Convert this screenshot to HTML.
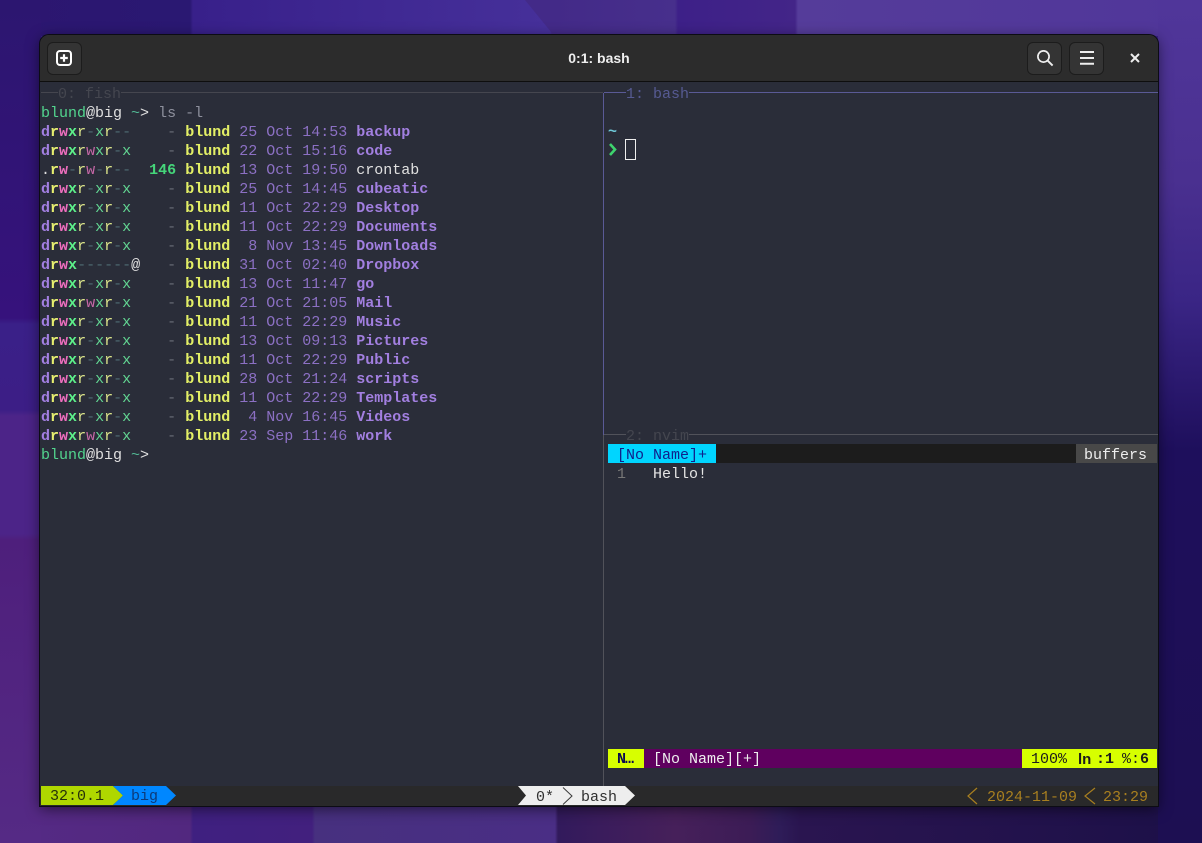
<!DOCTYPE html>
<html><head><meta charset="utf-8"><style>
html,body{margin:0;padding:0;width:1202px;height:843px;overflow:hidden;background:#3a2088}
div,pre,svg{position:absolute}
#top{left:0;top:0;width:1202px;height:36px;background:linear-gradient(90deg,#2c1670 0,#2a1872 190px,#38208a 193px,#46309a 550px,#432a88 552px,#472f8c 675px,#3d2088 678px,#432588 795px,#553c9a 798px,#50369a 1202px)}
#bot{left:0;top:806px;width:1202px;height:37px;background:linear-gradient(90deg,#552a85 0,#52287f 190px,#3f2080 193px,#42207e 312px,#47307f 315px,#4a2e85 555px,#321a5c 558px,#3a1c5c 600px,#46205a 675px,#3c1c56 750px,#2e1c58 780px,#2a1550 800px,#1c1048 1202px)}
#left{left:0;top:0;width:41px;height:843px;background:linear-gradient(180deg,#2c1670 0,#36127c 318px,#3a2088 324px,#3c1e86 410px,#4c2488 416px,#4c2488 534px,#4e1f7c 540px,#552a85 843px)}
#right{left:1158px;top:0;width:44px;height:843px;background:linear-gradient(180deg,#50369a 0,#4a3090 180px,#3a2585 300px,#1e0f5c 450px,#1d0f52 843px)}
#win{left:40px;top:35px;width:1118px;height:771px;background:#2a2d39;border-radius:9px 9px 0 0;box-shadow:0 0 0 1px #0c0c14,0 3px 14px rgba(0,0,0,.55);overflow:hidden}
#bar{left:0;top:0;width:1118px;height:46px;background:#2c2c2c;border-bottom:1px solid #0e0e0e}
.btn{width:33px;height:31px;top:7px;background:#343434;border:1px solid #1c1c1c;border-radius:6px}
#title{left:0;top:0;width:1118px;height:46px;line-height:46px;text-align:center;font:bold 14px/46px "Liberation Sans",sans-serif;color:#eee}
pre{margin:0;font:15px/19px "Liberation Mono",monospace;color:#e0e0e0;white-space:pre}
b{font-weight:bold}
.p1{color:#a27fe0;font-weight:bold}.y{color:#e6ee70;font-weight:bold}.w{color:#ee6fbe;font-weight:bold}.x{color:#5df08a;font-weight:bold}
.yn{color:#dbe48a}.wn{color:#c868a8}.xn{color:#62d592}.m{color:#4f6a72}
.u{color:#e3ef66;font-weight:bold}.dt{color:#8c70c4}.nm{color:#a27fe0;font-weight:bold}.sz{color:#45d67a;font-weight:bold}.dm{color:#6a6d78}
.gr{color:#52d58e}.c{color:#8d8f9c}
</style></head><body>
<div id="top"></div><div id="bot"></div><div id="left"></div><div id="right"></div>
<svg style="left:0;top:0" width="1202" height="36"><polygon points="525,0 556,38 556,0" fill="#432a88"/></svg>
<div id="win">
<div id="bar"></div>
<div id="title">0:1: bash</div>
<div class="btn" style="left:7px"></div>
<svg style="left:16px;top:15px" width="16" height="16" viewBox="0 0 16 16"><rect x="1" y="1" width="14" height="14" rx="3" fill="none" stroke="#fff" stroke-width="2"/><path d="M8 4.2v7.6M4.2 8h7.6" stroke="#fff" stroke-width="2.2"/></svg>
<div class="btn" style="left:987px"></div>
<svg style="left:996px;top:14px" width="18" height="18" viewBox="0 0 18 18"><circle cx="7.5" cy="7.5" r="5.6" fill="none" stroke="#eee" stroke-width="1.7"/><path d="M11.6 11.6L16.6 16.6" stroke="#eee" stroke-width="1.9"/></svg>
<div class="btn" style="left:1029px"></div>
<svg style="left:1039px;top:15px" width="16" height="16" viewBox="0 0 16 16"><path d="M1 2h14M1 8h14M1 13.7h14" stroke="#eee" stroke-width="2"/></svg>
<svg style="left:1090px;top:18px" width="10" height="10" viewBox="0 0 10 10"><path d="M1 1L9 9M9 1L1 9" stroke="#eee" stroke-width="2"/></svg>

<!-- pane lines (window offset 40,35) -->
<div style="left:1px;top:57px;width:562px;height:1px;background:#45464f"></div>
<div style="left:563px;top:58px;width:1px;height:342px;background:#5a5a96"></div>
<div style="left:563px;top:400px;width:1px;height:351px;background:#51525a"></div>
<div style="left:564px;top:57px;width:554px;height:1px;background:#5a5a96"></div>
<div style="left:564px;top:399px;width:554px;height:1px;background:#51525a"></div>
<pre style="left:18px;top:50px;background:#2a2d39;color:#44464f">0: fish</pre>
<pre style="left:586px;top:50px;background:#2a2d39;color:#565a92">1: bash</pre>
<pre style="left:586px;top:392px;background:#2a2d39;color:#44464f">2: nvim</pre>

<!-- left terminal -->
<pre style="left:1px;top:69px"><span class="gr">blund</span>@big <span style="color:#52b894">~</span>&gt; <span class="c">ls -l</span>
<span class="p1">d</span><span class="y">r</span><span class="w">w</span><span class="x">x</span><span class="yn">r</span><span class="m">-</span><span class="xn">x</span><span class="yn">r</span><span class="m">--</span>    <span class="dm">-</span> <span class="u">blund</span> <span class="dt">25 Oct 14:53</span> <span class="nm">backup</span>
<span class="p1">d</span><span class="y">r</span><span class="w">w</span><span class="x">x</span><span class="yn">r</span><span class="wn">w</span><span class="xn">x</span><span class="yn">r</span><span class="m">-</span><span class="xn">x</span>    <span class="dm">-</span> <span class="u">blund</span> <span class="dt">22 Oct 15:16</span> <span class="nm">code</span>
.<span class="y">r</span><span class="w">w</span><span class="m">-</span><span class="yn">r</span><span class="wn">w</span><span class="m">-</span><span class="yn">r</span><span class="m">--</span>  <span class="sz">146</span> <span class="u">blund</span> <span class="dt">13 Oct 19:50</span> crontab
<span class="p1">d</span><span class="y">r</span><span class="w">w</span><span class="x">x</span><span class="yn">r</span><span class="m">-</span><span class="xn">x</span><span class="yn">r</span><span class="m">-</span><span class="xn">x</span>    <span class="dm">-</span> <span class="u">blund</span> <span class="dt">25 Oct 14:45</span> <span class="nm">cubeatic</span>
<span class="p1">d</span><span class="y">r</span><span class="w">w</span><span class="x">x</span><span class="yn">r</span><span class="m">-</span><span class="xn">x</span><span class="yn">r</span><span class="m">-</span><span class="xn">x</span>    <span class="dm">-</span> <span class="u">blund</span> <span class="dt">11 Oct 22:29</span> <span class="nm">Desktop</span>
<span class="p1">d</span><span class="y">r</span><span class="w">w</span><span class="x">x</span><span class="yn">r</span><span class="m">-</span><span class="xn">x</span><span class="yn">r</span><span class="m">-</span><span class="xn">x</span>    <span class="dm">-</span> <span class="u">blund</span> <span class="dt">11 Oct 22:29</span> <span class="nm">Documents</span>
<span class="p1">d</span><span class="y">r</span><span class="w">w</span><span class="x">x</span><span class="yn">r</span><span class="m">-</span><span class="xn">x</span><span class="yn">r</span><span class="m">-</span><span class="xn">x</span>    <span class="dm">-</span> <span class="u">blund</span> <span class="dt"> 8 Nov 13:45</span> <span class="nm">Downloads</span>
<span class="p1">d</span><span class="y">r</span><span class="w">w</span><span class="x">x</span><span class="m">------</span>@   <span class="dm">-</span> <span class="u">blund</span> <span class="dt">31 Oct 02:40</span> <span class="nm">Dropbox</span>
<span class="p1">d</span><span class="y">r</span><span class="w">w</span><span class="x">x</span><span class="yn">r</span><span class="m">-</span><span class="xn">x</span><span class="yn">r</span><span class="m">-</span><span class="xn">x</span>    <span class="dm">-</span> <span class="u">blund</span> <span class="dt">13 Oct 11:47</span> <span class="nm">go</span>
<span class="p1">d</span><span class="y">r</span><span class="w">w</span><span class="x">x</span><span class="yn">r</span><span class="wn">w</span><span class="xn">x</span><span class="yn">r</span><span class="m">-</span><span class="xn">x</span>    <span class="dm">-</span> <span class="u">blund</span> <span class="dt">21 Oct 21:05</span> <span class="nm">Mail</span>
<span class="p1">d</span><span class="y">r</span><span class="w">w</span><span class="x">x</span><span class="yn">r</span><span class="m">-</span><span class="xn">x</span><span class="yn">r</span><span class="m">-</span><span class="xn">x</span>    <span class="dm">-</span> <span class="u">blund</span> <span class="dt">11 Oct 22:29</span> <span class="nm">Music</span>
<span class="p1">d</span><span class="y">r</span><span class="w">w</span><span class="x">x</span><span class="yn">r</span><span class="m">-</span><span class="xn">x</span><span class="yn">r</span><span class="m">-</span><span class="xn">x</span>    <span class="dm">-</span> <span class="u">blund</span> <span class="dt">13 Oct 09:13</span> <span class="nm">Pictures</span>
<span class="p1">d</span><span class="y">r</span><span class="w">w</span><span class="x">x</span><span class="yn">r</span><span class="m">-</span><span class="xn">x</span><span class="yn">r</span><span class="m">-</span><span class="xn">x</span>    <span class="dm">-</span> <span class="u">blund</span> <span class="dt">11 Oct 22:29</span> <span class="nm">Public</span>
<span class="p1">d</span><span class="y">r</span><span class="w">w</span><span class="x">x</span><span class="yn">r</span><span class="m">-</span><span class="xn">x</span><span class="yn">r</span><span class="m">-</span><span class="xn">x</span>    <span class="dm">-</span> <span class="u">blund</span> <span class="dt">28 Oct 21:24</span> <span class="nm">scripts</span>
<span class="p1">d</span><span class="y">r</span><span class="w">w</span><span class="x">x</span><span class="yn">r</span><span class="m">-</span><span class="xn">x</span><span class="yn">r</span><span class="m">-</span><span class="xn">x</span>    <span class="dm">-</span> <span class="u">blund</span> <span class="dt">11 Oct 22:29</span> <span class="nm">Templates</span>
<span class="p1">d</span><span class="y">r</span><span class="w">w</span><span class="x">x</span><span class="yn">r</span><span class="m">-</span><span class="xn">x</span><span class="yn">r</span><span class="m">-</span><span class="xn">x</span>    <span class="dm">-</span> <span class="u">blund</span> <span class="dt"> 4 Nov 16:45</span> <span class="nm">Videos</span>
<span class="p1">d</span><span class="y">r</span><span class="w">w</span><span class="x">x</span><span class="yn">r</span><span class="wn">w</span><span class="xn">x</span><span class="yn">r</span><span class="m">-</span><span class="xn">x</span>    <span class="dm">-</span> <span class="u">blund</span> <span class="dt">23 Sep 11:46</span> <span class="nm">work</span>
<span class="gr">blund</span>@big <span style="color:#52b894">~</span>&gt;</pre>

<!-- right top -->
<pre style="left:568px;top:88px;color:#6fc8d8;font-weight:bold">~</pre>
<svg style="left:568px;top:107px" width="10" height="15" viewBox="0 0 10 15"><path d="M2 2L7 7.5L2 13" fill="none" stroke="#3ed46e" stroke-width="2.6"/></svg>
<div style="left:585px;top:104px;width:9px;height:19px;border:1px solid #eee;box-sizing:content-box"></div>

<!-- nvim -->
<div style="left:568px;top:409px;width:549px;height:19px;background:#1c1c1c"></div>
<div style="left:568px;top:409px;width:108px;height:19px;background:#00d5ff"></div>
<pre style="left:577px;top:411px;height:17px;color:#10208c">[No Name]+</pre>
<div style="left:1036px;top:409px;width:81px;height:19px;background:#484848"></div>
<pre style="left:1044px;top:411px;height:17px;color:#eee">buffers</pre>
<pre style="left:577px;top:430px;color:#777">1</pre>
<pre style="left:613px;top:430px;color:#e4e4e4">Hello!</pre>

<div style="left:568px;top:714px;width:549px;height:19px;background:#5f005f"></div>
<div style="left:568px;top:714px;width:36px;height:19px;background:#d7ff00"></div>
<pre style="left:577px;top:715px;color:#0a0a50;font-weight:bold;letter-spacing:-1px">N…</pre>
<pre style="left:613px;top:715px;color:#eee">[No Name][+]</pre>
<div style="left:982px;top:714px;width:135px;height:19px;background:#d7ff00"></div>
<pre style="left:991px;top:715px;color:#1c1c1c">100%</pre>
<pre style="left:1038px;top:715px;color:#1c1c1c;font-family:'Liberation Sans',sans-serif;font-weight:bold">ln</pre>
<pre style="left:1056px;top:715px;color:#1c1c1c;font-weight:bold">:1</pre>
<pre style="left:1082px;top:715px;color:#1c1c1c">%:<b>6</b></pre>

<!-- tmux status -->
<div style="left:0;top:751px;width:1118px;height:20px;background:#29292a"></div>
<svg style="left:0;top:751px" width="1118" height="20">
<polygon points="1,0 73,0 83,9.5 73,19 1,19" fill="#afd700"/>
<polygon points="73,0 126,0 136,9.5 126,19 73,19 83,9.5" fill="#0087ff"/>
<polygon points="478,0 585,0 595,9.5 585,19 478,19 486,9.5" fill="#eeeeee"/>
<path d="M523 1.5L532 10L523 18.5" fill="none" stroke="#3a3a3a" stroke-width="1"/>
<path d="M937 2L928 10L937 18M1055 2L1045 10L1055 18" fill="none" stroke="#a87f20" stroke-width="1.2"/>
</svg>
<pre style="left:10px;top:752px;color:#26320a">32:0.1</pre>
<pre style="left:91px;top:752px;color:#0c3a7a">big</pre>
<pre style="left:496px;top:753px;color:#303030">0*</pre>
<pre style="left:541px;top:753px;color:#303030">bash</pre>
<pre style="left:947px;top:753px;color:#a87f20">2024-11-09</pre>
<pre style="left:1063px;top:753px;color:#a87f20">23:29</pre>
</div>
</body></html>
